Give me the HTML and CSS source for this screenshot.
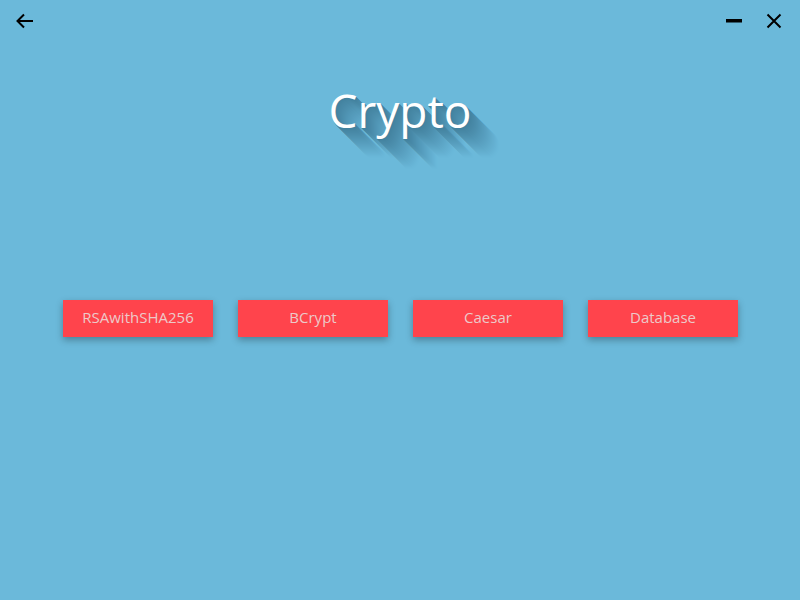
FILE: index.html
```html
<!DOCTYPE html>
<html>
<head>
<meta charset="utf-8">
<link rel="stylesheet" href="styles.css">
</head>
<body>
<div class="window">
  <div class="titlebar">
    <button class="icon-btn back" aria-label="Back">
      <svg width="18" height="16" viewBox="0 0 18 16"><path d="M1.5 8 H17 M8 1.5 L1.5 8 L8 14.5" fill="none" stroke="#000" stroke-width="2"/></svg>
    </button>
    <div class="spacer"></div>
    <button class="icon-btn min" aria-label="Minimize">
      <svg width="16" height="4" viewBox="0 0 16 4"><rect x="0" y="0" width="16" height="3.5" fill="#000"/></svg>
    </button>
    <button class="icon-btn close" aria-label="Close">
      <svg width="16" height="16" viewBox="0 0 16 16"><path d="M1.5 1.5 L14.5 14.5 M14.5 1.5 L1.5 14.5" fill="none" stroke="#000" stroke-width="2"/></svg>
    </button>
  </div>
  <h1 class="title">Crypto</h1>
  <div class="actions">
    <button class="action">RSAwithSHA256</button>
    <button class="action">BCrypt</button>
    <button class="action">Caesar</button>
    <button class="action">Database</button>
  </div>
</div>
</body>
</html>
```

FILE: styles.css
```css
html, body {
  margin: 0;
  padding: 0;
  width: 800px;
  height: 600px;
  overflow: hidden;
  background: #6bb9da;
  font-family: "Open Sans", "Noto Sans", sans-serif;
}
.window {
  display: flex;
  flex-direction: column;
  height: 600px;
}
.titlebar {
  display: flex;
  align-items: center;
  height: 42px;
  padding: 0 16px 0 16px;
}
.spacer { flex: 1; }
.icon-btn {
  background: none;
  border: 0;
  padding: 0;
  margin: 0;
  display: flex;
  align-items: center;
  justify-content: center;
  cursor: pointer;
}
.back { margin-top: -1px; }
.min { margin-right: 24px; }
.close { margin-right: 2px; }
.title {
  margin: 40px 0 0 0;
  text-align: center;
  font-weight: 400;
  font-size: 46px;
  line-height: 56px;
  color: #ffffff;
  text-shadow:
    0.5px 0.5px #43829f, 1px 1px #4483a0, 1.5px 1.5px #4484a1, 2px 2px #4585a2,
    2.5px 2.5px #4686a3, 3px 3px #4687a4, 3.5px 3.5px #4788a5, 4px 4px #4888a6,
    4.5px 4.5px #4889a7, 5px 5px #498aa8, 5.5px 5.5px #4a8ba9, 6px 6px #4a8caa,
    6.5px 6.5px #4b8dab, 7px 7px #4c8eac, 7.5px 7.5px #4c8fad, 8px 8px #4d90ae,
    8.5px 8.5px #4e91af, 9px 9px #4e92b0, 9.5px 9.5px #4f93b1, 10px 10px #5094b3,
    10.5px 10.5px #5095b4, 11px 11px #5196b5, 11.5px 11.5px #5297b6, 12px 12px #5298b7,
    12.5px 12.5px #5399b8, 13px 13px #549ab9, 13.5px 13.5px #549bba, 14px 14px #559bbb,
    14.5px 14.5px #569cbc, 15px 15px #579dbd, 15.5px 15.5px #579ebe, 16px 16px #589fbf,
    16.5px 16.5px #59a0c0, 17px 17px #59a1c1, 17.5px 17.5px #5aa2c2, 18px 18px #5ba3c3,
    18.5px 18.5px #5ba4c4, 19px 19px #5ca5c5, 19.5px 19.5px #5da6c6, 20px 20px #5ea7c7,
    20.5px 20.5px #5ea8c8, 21px 21px #5fa9c9, 21.5px 21.5px #60aaca, 22px 22px #60abcb,
    22.5px 22.5px #61accc, 23px 23px #62adcd, 23.5px 23.5px #62aece, 24px 24px #63aecf,
    24.5px 24.5px #64afd0, 25px 25px #64b0d1, 25.5px 25.5px #65b1d2, 26px 26px #66b2d3,
    26.5px 26.5px #66b3d4, 27px 27px #67b4d5, 27.5px 27.5px #68b5d6, 28px 28px #68b6d7,
    28.5px 28.5px #69b7d8, 29px 29px #6ab8d9, 29.5px 29.5px #6ab8d9, 30px 30px #6bb9da;
}
.actions {
  display: flex;
  justify-content: center;
  gap: 25px;
  margin-top: 162px;
  padding-left: 1px;
}
.action {
  width: 150px;
  height: 37px;
  border: 0;
  margin: 0;
  padding: 0 0 3px 0;
  background: #ff444c;
  color: #edc9c9;
  font-family: "Open Sans", "Noto Sans", sans-serif;
  font-size: 15px;
  box-shadow: 0 3px 7px rgba(0, 0, 0, 0.3);
  cursor: pointer;
}
```
